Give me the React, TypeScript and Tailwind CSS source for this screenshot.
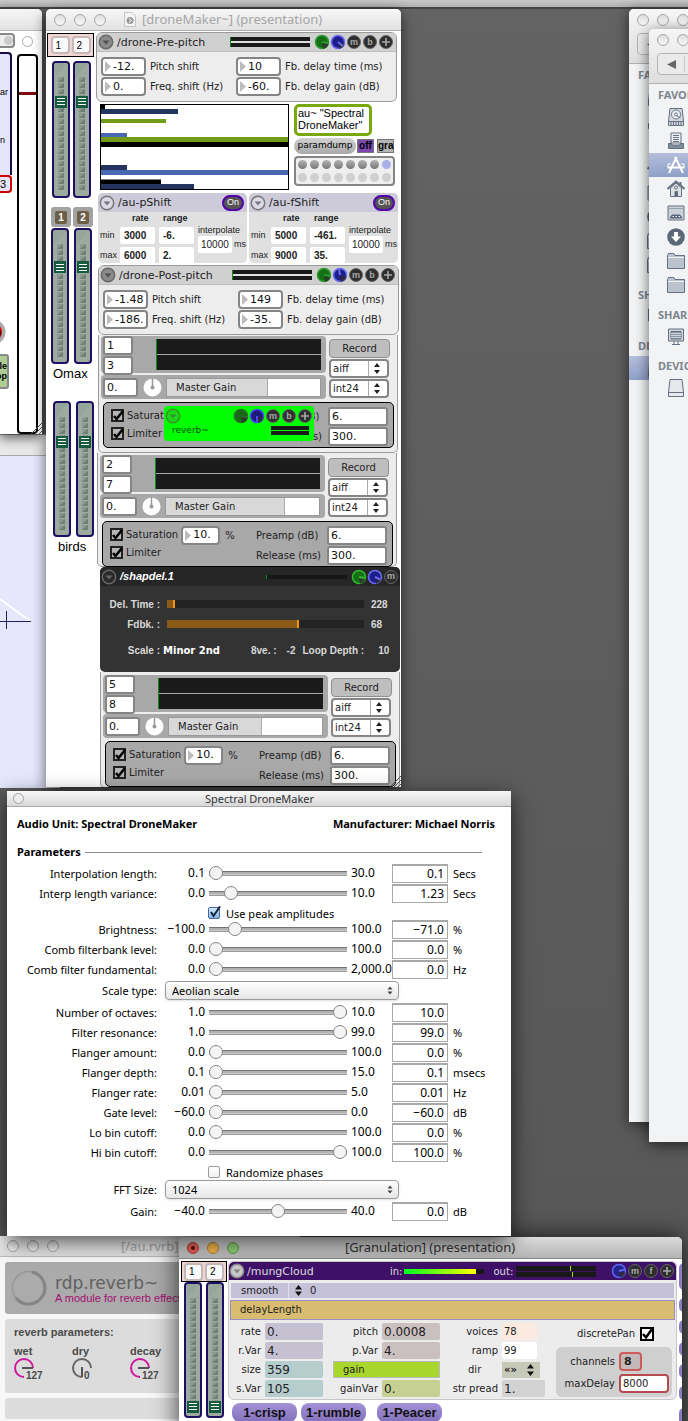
import React from "react";

const verdana = "font-['DejaVu_Sans',sans-serif]";
const lucida = "font-['Noto_Sans',sans-serif]";
const arial = "font-['Liberation_Sans',sans-serif]";

function Lights({ count = 3 }: { count?: number }) {
  return (
    <div className="flex gap-2">
      {Array.from({ length: count }, (_, i) => (
        <button
          key={i}
          aria-label="Window control"
          className="h-3 w-3 shrink-0 rounded-full border border-[#a6a6a6] bg-linear-to-b from-[#dedede] to-[#f8f8f8]"
        />
      ))}
    </div>
  );
}

function Resize() {
  return (
    <svg className="absolute right-0 bottom-0 h-3 w-3" viewBox="0 0 12 12" stroke="#555" strokeWidth="1">
      <path d="M1 12L12 1M5 12L12 5M9 12L12 9" />
    </svg>
  );
}

function Fader({ value, height = "h-[136px]" }: { value: number; height?: string }) {
  const id = React.useId();
  return (
    <div className={`relative w-[18px] shrink-0 overflow-hidden rounded-[4px] border-2 border-[#1d0f63] bg-[#9dab9f] ${height}`}>
      <svg className="absolute inset-0 h-full w-full" aria-hidden="true">
        <defs>
          <pattern id={id} width="6" height="6" patternUnits="userSpaceOnUse" x="4" y="14">
            <rect width="6" height="6" fill="#8b9a90" />
            <path d="M6 0V5H0Z" fill="#6f7f75" />
            <rect y="5" width="6" height="1" fill="#9dab9f" />
          </pattern>
        </defs>
        <path d="M1 0H13L1 14Z" fill="#95a599" />
        <rect x="4" y="14" width="6" height="114" fill={`url(#${id})`} />
      </svg>
      <input
        type="range"
        aria-label="Level"
        defaultValue={value}
        className="absolute inset-0 m-0 h-full w-full appearance-none bg-transparent [direction:rtl] [writing-mode:vertical-lr] [&::-webkit-slider-thumb]:mx-px [&::-webkit-slider-thumb]:h-[12px] [&::-webkit-slider-thumb]:w-[12px] [&::-webkit-slider-thumb]:appearance-none [&::-webkit-slider-thumb]:bg-[#175b3e] [&::-webkit-slider-thumb]:bg-[linear-gradient(#fff_0_1px,transparent_1px_3px,#fff_3px_4px,transparent_4px_6px,#fff_6px_7px)] [&::-webkit-slider-thumb]:bg-[length:8px_7px] [&::-webkit-slider-thumb]:bg-center [&::-webkit-slider-thumb]:bg-no-repeat"
      />
    </div>
  );
}

function ChannelPair({ className = "" }: { className?: string }) {
  return (
    <div className={`flex h-6 items-center justify-center gap-[2px] border border-black bg-[#f1d5d5] ${className}`}>
      {["1", "2"].map((v) => (
        <input
          key={v}
          aria-label={`Channel ${v}`}
          defaultValue={v}
          className={`h-[18px] w-[19px] rounded-[4px] border-2 border-[#c4b8b8] bg-[#fbfafa] pl-[3px] text-[10px] ${arial}`}
        />
      ))}
    </div>
  );
}

function Collapse({ tone = "dark" }: { tone?: "dark" | "light" | "green" | "black" | "plain" }) {
  const fill = { dark: "#8b8b8b", light: "#dcdae6", green: "#18d818", black: "#2a2a2a", plain: "#c8c8c8" }[tone];
  const ring = { dark: "#686868", light: "#777", green: "#3b8f2b", black: "#666", plain: "#888" }[tone];
  return (
    <button aria-label="Collapse" className="h-4 w-4 shrink-0">
      <svg viewBox="0 0 16 16">
        <circle cx="8" cy="8" r="6.700" fill={fill} stroke={ring} strokeWidth="1.500" />
        <path d="M4.500 6.500H11.500L8 10.500Z" fill={tone === "dark" ? "#505050" : ring} />
      </svg>
    </button>
  );
}

function Dial({ color, angle, dark }: { color: string; angle: number; dark: string }) {
  return (
    <svg className="h-4 w-4 shrink-0" viewBox="0 0 16 16" role="img" aria-label="Dial">
      <circle cx="8" cy="8" r="6.500" fill={dark} stroke={color} strokeWidth="1.600" />
      <path d="M8 8L14.500 9.500A7 7 0 0 1 9 15Z" fill="#2c2c2c" opacity="0.750" />
      <path d="M8 8V1.700" stroke={color} strokeWidth="2" transform={`rotate(${angle} 8 8)`} />
    </svg>
  );
}

function RoundKey({ label }: { label: string }) {
  return (
    <button
      aria-label={label}
      className={`m-px flex h-[14px] w-[14px] shrink-0 items-center justify-center rounded-full border border-[#666] bg-[#2e2e2e] text-[9px] leading-none font-bold text-[#a8a8a8] ${arial}`}
    >
      {label === "+" ? (
        <svg viewBox="0 0 10 10" className="h-[10px] w-[10px] shrink-0" stroke="#a8a8a8" strokeWidth="1.600">
          <path d="M5 1V9M1 5H9" />
        </svg>
      ) : (
        label
      )}
    </button>
  );
}

function NumBox({ value, label, className = "w-[45px]" }: { value: string; label: string; className?: string }) {
  return (
    <div className={`flex h-[19px] shrink-0 items-center rounded-[4px] border-2 border-[#858585] bg-white ${className}`}>
      <svg className="ml-[2px] h-[11px] w-[6px] shrink-0" viewBox="0 0 6 11">
        <path d="M0 0L6 5.500L0 11Z" fill="#bcbcbc" />
      </svg>
      <input aria-label={label} defaultValue={value} className={`w-full min-w-0 bg-transparent pl-[2px] text-[11px] text-[#111] ${verdana}`} />
    </div>
  );
}

function PlainBox({ value, label, className = "" }: { value: string; label: string; className?: string }) {
  return (
    <input
      aria-label={label}
      defaultValue={value}
      className={`h-[19px] shrink-0 rounded-[3px] border-2 border-[#858585] bg-white pl-[2px] text-[11px] leading-none text-[#111] ${verdana} ${className}`}
    />
  );
}

function PitchPanel({ title, values, angle, className = "" }: { title: string; values: string[]; angle: number; className?: string }) {
  const labels = ["Pitch shift", "Fb. delay time (ms)", "Freq. shift (Hz)", "Fb. delay gain (dB)"];
  return (
    <section className={`h-[70px] w-[301px] rounded-[6px] border border-[#9a9a9a] bg-[#ededed] ${className}`}>
      <header className="flex h-[19px] items-center rounded-t-[5px] border-b border-[#bdbdbd] bg-[#d0d0d0] pr-[2px] pl-[1px]">
        <Collapse />
        <h2 className={`pl-[3px] text-[11px] leading-none text-[#222] ${verdana}`}>{title}</h2>
        <div className="ml-auto flex items-center">
          <div className="mr-1 h-[10px] w-[80px] border-l border-[#0b8a0b] bg-[linear-gradient(#1a1a1a_0_4px,#e0e0e0_4px_6px,#1a1a1a_6px)]" />
          <Dial color="#2f9a2f" dark="#157015" angle={100} />
          <Dial color="#6a6af0" dark="#1d1d8c" angle={angle} />
          <RoundKey label="m" />
          <RoundKey label="b" />
          <RoundKey label="+" />
        </div>
      </header>
      <div className={`grid grid-cols-[45px_90px_45px_auto] gap-y-[1px] pt-[5px] pl-1 text-[10px] leading-[19px] text-[#222] ${verdana}`}>
        {labels.map((l, i) => (
          <React.Fragment key={l}>
            <NumBox value={values[i]} label={l} />
            <span className="pl-1 whitespace-nowrap">{l}</span>
          </React.Fragment>
        ))}
      </div>
    </section>
  );
}

function Spectrum() {
  return (
    <svg className="h-[86px] w-[189px] shrink-0" viewBox="0 0 189 86" role="img" aria-label="Spectrum">
      <rect x="0.500" y="0.500" width="188" height="85" fill="#fff" stroke="#000" />
      <path d="M1 3.500H5M1 78H61" stroke="#000" strokeWidth="5" />
      <path d="M1 7.500H78M1 63.500H27M1 82.500H94" stroke="#24345c" strokeWidth="5" />
      <path d="M1 17H66" stroke="#729c17" strokeWidth="4" />
      <path d="M1 31H27" stroke="#4a67b2" strokeWidth="4" />
      <path d="M1 68.500H188" stroke="#4a67b2" strokeWidth="5" />
      <path d="M1 35.500H188" stroke="#729c17" strokeWidth="5" />
      <path d="M1 40.500H188" stroke="#000" strokeWidth="5" />
    </svg>
  );
}

function ShiftPanel({ title, values }: { title: string; values: string[] }) {
  const field = "h-[17px] w-[35px] rounded-[2px] bg-white pl-1 text-[10px] font-bold";
  return (
    <section className={`h-[70px] w-[149px] shrink-0 rounded-[5px] bg-[#e0e0e0] text-[9px] text-[#222] ${arial}`}>
      <header className="flex h-[19px] items-center rounded-t-[5px] bg-[#cdcbd9] px-[1px]">
        <Collapse tone="light" />
        <h2 className={`pl-[3px] text-[11px] leading-none ${verdana}`}>{title}</h2>
        <button className="mr-[2px] ml-auto h-4 w-[22px] rounded-full border-2 border-[#5200a8] bg-[#555] text-[9px] leading-none text-white">On</button>
      </header>
      <div className="flex pl-[2px]">
        <div className="grid grid-cols-[20px_39px_35px] gap-y-[3px]">
          <span />
          <b className="pl-3 leading-3">rate</b>
          <b className="pl-1 leading-3">range</b>
          <span className="leading-[17px]">min</span>
          <input aria-label="min rate" defaultValue={values[0]} className={field} />
          <input aria-label="min range" defaultValue={values[1]} className={field} />
          <span className="leading-[17px]">max</span>
          <input aria-label="max rate" defaultValue={values[2]} className={field} />
          <input aria-label="max range" defaultValue={values[3]} className={field} />
        </div>
        <div className="pt-[12px] pl-1">
          <span className="block leading-3 whitespace-nowrap">interpolate</span>
          <label className="flex items-center gap-[2px]">
            <input defaultValue="10000" className="h-[17px] w-[34px] rounded-[2px] bg-white pl-[3px] text-[10px]" />
            ms
          </label>
        </div>
      </div>
    </section>
  );
}

function Check({ label }: { label: string }) {
  return (
    <label className="flex h-[18px] items-center gap-[3px]">
      <span className="relative h-[13px] w-[13px]">
        <input type="checkbox" defaultChecked className="block h-[13px] w-[13px] appearance-none border-2 border-[#222] bg-[#b5b5b5]" />
        <svg className="pointer-events-none absolute inset-0 h-[13px] w-[13px]" viewBox="0 0 13 13" fill="none" stroke="#000" strokeWidth="2.500">
          <path d="M3 7L5.500 10L12 2" />
        </svg>
      </span>
      {label}
    </label>
  );
}

function FormatSelect({ value }: { value: string }) {
  return (
    <div className="relative h-[19px] w-[60px] rounded-[4px] border-2 border-[#858585] bg-white">
      <select aria-label={value} className={`block h-full w-full appearance-none pl-[2px] text-[10px] leading-none ${verdana}`}>
        <option>{value}</option>
      </select>
      <svg className="pointer-events-none absolute top-0 right-0 h-[15px] w-[20px]" viewBox="0 0 20 15">
        <path d="M1.500 0V15" stroke="#aaa" />
        <path d="M7 6L10 2L13 6ZM7 9L10 13L13 9Z" fill="#222" />
      </svg>
    </div>
  );
}

function Recorder({ a, b, gain, className = "", children }: { a: string; b: string; gain: number; className?: string; children?: React.ReactNode }) {
  return (
    <section className={`relative w-[300px] shrink-0 rounded-b-[5px] border border-t-0 border-[#9a9a9a] bg-[#ededed] pl-[2px] text-[10px] text-[#222] ${verdana} ${className}`}>
      <div className="flex gap-[3px]">
        <div className="flex w-[225px] flex-col gap-[2px]">
          <div className="flex h-[37px] justify-between rounded-[4px] bg-[#a8a8a8] pr-[5px] pl-[2px]">
            <div className="flex flex-col gap-[1px]">
              <PlainBox value={a} label="Input A" className="w-[30px]" />
              <PlainBox value={b} label="Input B" className="w-[30px]" />
            </div>
            <div className="mt-[3px] h-[31px] w-[165px] border-l border-[#0b8a0b] bg-[linear-gradient(#1a1a1a_0_15px,#a8a8a8_15px_16px,#1a1a1a_16px)]" />
          </div>
          <div className="flex h-[24px] items-center rounded-[4px] bg-[#a8a8a8] pr-[5px] pl-[2px]">
            <PlainBox value="0." label="Gain value" className="w-[35px]" />
            <svg className="ml-[5px] h-[19px] w-[19px] shrink-0" viewBox="0 0 19 19" role="img" aria-label="Pan">
              <circle cx="9.500" cy="9.500" r="9" fill="#fff" />
              <path d="M9.500 0V9" stroke="#999" strokeWidth="1.500" />
              <circle cx="9.500" cy="9.500" r="2" fill="#999" />
            </svg>
            <div className="relative ml-auto h-[19px] w-[155px] border border-[#999] bg-white">
              <div className="flex h-full items-center border-r border-[#aaa] bg-[#d8d8d8] pl-[9px] whitespace-nowrap" style={{ width: `${gain}%` }}>
                Master Gain
              </div>
              <input type="range" aria-label="Master Gain" defaultValue={gain} className="absolute inset-0 m-0 h-full w-full opacity-0" />
            </div>
          </div>
        </div>
        <div className="flex flex-col gap-[1px] pt-[3px]">
          <button className="h-[19px] w-[61px] rounded-[4px] border border-[#909090] bg-[#bebebe]">Record</button>
          <FormatSelect value="aiff" />
          <FormatSelect value="int24" />
        </div>
      </div>
      <div className="mt-[3px] ml-[2px] flex h-[46px] w-[291px] items-start rounded-[5px] border border-black bg-[#a8a8a8] pl-[7px] whitespace-nowrap">
        <div className="pt-[3px]">
          <Check label="Saturation" />
          <Check label="Limiter" />
        </div>
        <div className="flex items-center gap-[5px] pt-[4px] pl-[3px]">
          <NumBox value="10." label="Saturation amount" className="w-[39px]" />%
        </div>
        <div className="ml-auto grid grid-cols-[71px_60px] gap-y-[1px] pt-[4px] pr-[5px] leading-[19px]">
          <span>Preamp (dB)</span>
          <PlainBox value="6." label="Preamp (dB)" className="w-[60px]" />
          <span>Release (ms)</span>
          <PlainBox value="300." label="Release (ms)" className="w-[60px]" />
        </div>
      </div>
      {children}
    </section>
  );
}

function ReverbOverlay() {
  return (
    <div className="absolute top-[71px] left-[65px] h-[35px] w-[150px] rounded-[4px] bg-[#00ff00] pt-[2px] pr-[1px] pl-[1px]">
      <div className="flex justify-between">
        <Collapse tone="green" />
        <div className="flex">
          <Dial color="#2c6d2c" dark="#156b15" angle={100} />
          <Dial color="#4a4ae8" dark="#191980" angle={180} />
          <RoundKey label="m" />
          <RoundKey label="b" />
          <RoundKey label="+" />
        </div>
      </div>
      <div className={`flex items-center justify-between pr-1 pl-[7px] text-[9px] text-[#0b4a0b] ${verdana}`}>
        <span>reverb~</span>
        <span className="h-[9px] w-[38px] bg-[linear-gradient(#1a1a1a_0_4px,#00ff00_4px_5px,#1a1a1a_5px)]" />
      </div>
    </div>
  );
}

function ShapDel() {
  const rows = [
    { label: "Del. Time :", value: "228", pct: 4 },
    { label: "Fdbk. :", value: "68", pct: 67 },
  ];
  return (
    <section className={`relative ml-1 h-[105px] w-[300px] shrink-0 overflow-hidden rounded-[5px] bg-[#333] text-[10px] font-bold text-[#d8d8d8] ${arial}`}>
      <header className="flex h-[19px] items-center bg-[#262626] pr-[1px] pl-[1px]">
        <Collapse tone="black" />
        <h2 className="pl-[3px] text-[11px] text-white italic">/shapdel.1</h2>
        <div className="ml-auto h-1 w-[81px] border-l border-[#0b8a0b] bg-[#161616]" />
        <div className="ml-1 flex">
          <Dial color="#2fb52f" dark="#157015" angle={100} />
          <Dial color="#6a6af0" dark="#1d1d8c" angle={115} />
          <RoundKey label="m" />
        </div>
      </header>
      <div className="flex flex-col gap-2 pt-3">
        {rows.map((r) => (
          <label key={r.label} className="flex h-3 items-center">
            <span className="w-[60px] text-right">{r.label}</span>
            <span className="relative ml-[7px] h-2 w-[197px] bg-[#232323]">
              <span className="block h-2 border-r-2 border-[#f0941a] bg-[#8a5a18]" style={{ width: `${r.pct}%` }} />
              <input type="range" defaultValue={r.pct} className="absolute inset-0 m-0 h-full w-full opacity-0" />
            </span>
            <span className="pl-[7px]">{r.value}</span>
          </label>
        ))}
      </div>
      <div className="flex items-center pt-[13px] whitespace-nowrap">
        <span className="w-[60px] text-right">Scale :</span>
        <span className={`w-[91px] pl-[3px] text-[10px] text-white ${verdana}`}>Minor 2nd</span>
        <span>8ve. :</span>
        <span className="pl-[10px]">-2</span>
        <span className="pl-[7px]">Loop Depth :</span>
        <span className="pl-[14px]">10</span>
      </div>
    </section>
  );
}

function DroneWindow() {
  return (
    <main className="absolute top-[9px] left-[46px] flex h-[778px] w-[355px] flex-col overflow-hidden rounded-t-[5px] bg-white shadow-[0_4px_14px_rgba(0,0,0,0.600)]">
      <header className={`flex h-[22px] shrink-0 items-center border-b border-[#b0b0b0] bg-linear-to-b from-[#f7f7f7] to-[#e2e2e2] pl-2 ${lucida}`}>
        <Lights />
        <svg className="ml-[18px] h-[15px] w-3" viewBox="0 0 12 15">
          <path d="M0.500 0.500H8L11.500 4V14.500H0.500Z" fill="#f5f5f5" stroke="#c4c4c4" />
          <circle cx="6" cy="8.500" r="3.500" fill="#999" />
          <path d="M5 6.500L7.500 8.500L5 10.500" stroke="#fff" fill="none" />
        </svg>
        <h1 className="pl-[6px] text-[13px] leading-none text-[#a5a5a5]">[droneMaker~] (presentation)</h1>
      </header>
      <div className="flex">
        <aside className={`flex w-[50px] shrink-0 flex-col pt-[2px] pl-[1px] ${arial}`}>
          <ChannelPair className="w-[47px]" />
          <div className="mt-1 flex gap-[3px] pl-[5px]">
            <Fader value={72} height="h-[137px]" />
            <Fader value={72} height="h-[137px]" />
          </div>
          <div className="mt-[9px] flex gap-[2px] pl-1">
            {["1", "2"].map((n) => (
              <span key={n} className="flex h-[20px] w-[20px] items-center justify-center rounded-[3px] bg-[#a2a2a2] text-[10px] font-bold text-white">
                <span className="h-[13px] w-3 rounded-[2px] bg-[#6d5f45] text-center leading-[13px]">{n}</span>
              </span>
            ))}
          </div>
          <div className="mt-[1px] flex gap-[5px] pl-1">
            <Fader value={73} />
            <Fader value={73} />
          </div>
          <p className="pt-[1px] pl-[6px] text-[13px] leading-[18px]">Omax</p>
          <div className="mt-[18px] flex gap-[5px] pl-[6px]">
            <Fader value={72} />
            <Fader value={72} />
          </div>
          <p className="pt-[1px] pl-[11px] text-[13px] leading-[18px]">birds</p>
        </aside>
        <div className="flex flex-col pt-[1px]">
          <PitchPanel title="/drone-Pre-pitch" values={["-12.", "10", "0.", "-60."]} angle={130} />
          <div className="mt-[2px] flex pl-1">
            <Spectrum />
            <div className="flex flex-col pl-[5px]">
              <div className={`h-8 w-[78px] rounded-[5px] border-[3px] border-[#78a80b] bg-white pl-[1px] text-[11px] leading-3 ${arial}`}>au~ "Spectral DroneMaker"</div>
              <div className={`mt-[2px] flex items-center text-[11px] font-bold ${arial}`}>
                <button className={`h-4 w-[62px] rounded-full bg-linear-to-b from-[#d2d2d2] to-[#a8a8a8] text-[9px] font-normal ${verdana}`}>paramdump</button>
                <button className="ml-px h-[14px] w-[17px] border border-[#777] bg-[#7b48b0] text-[10px] leading-none">off</button>
                <button className="ml-[3px] h-[14px] w-[17px] border border-[#777] bg-[#b4b4b4] text-[10px] leading-none">gra</button>
              </div>
              <div className="mt-[2px] grid h-[30px] w-[101px] grid-cols-8 place-items-center rounded-[4px] border-2 border-[#858585] bg-[#efefef]">
                {Array.from({ length: 16 }, (_, i) => (
                  <button
                    key={i}
                    aria-label={`Preset ${i + 1}`}
                    className={`h-[9px] w-[9px] rounded-full ${i === 7 ? "bg-[#a9b0ea]" : i < 7 ? "bg-linear-to-b from-[#b5b5b5] to-[#777]" : "bg-[#d0d0d0]"}`}
                  />
                ))}
              </div>
            </div>
          </div>
          <div className="mt-[3px] flex gap-[2px] pl-[2px]">
            <ShiftPanel title="/au-pShift" values={["3000", "-6.", "6000", "2."]} />
            <ShiftPanel title="/au-fShift" values={["5000", "-461.", "9000", "35."]} />
          </div>
          <PitchPanel title="/drone-Post-pitch" values={["-1.48", "149", "-186.", "-35."]} angle={-10} className="mt-[2px] ml-[2px]" />
          <Recorder a="1" b="3" gain={66} className="ml-[2px] h-[118px] pt-[1px]">
            <ReverbOverlay />
          </Recorder>
          <Recorder a="2" b="7" gain={78} className="ml-[1px] h-[114px] pt-[2px]" />
          <ShapDel />
          <Recorder a="5" b="8" gain={61} className="ml-[4px] h-[116px] pt-[3px]" />
        </div>
      </div>
      <Resize />
    </main>
  );
}

type Param = { name: string; min: string; max: string; value: string; unit: string; pct: number };
const params: (Param | { check: string; on: boolean } | { select: string; name: string })[] = [
  { name: "Interpolation length:", min: "0.1", max: "30.0", value: "0.1", unit: "Secs", pct: 0 },
  { name: "Interp length variance:", min: "0.0", max: "10.0", value: "1.23", unit: "Secs", pct: 12 },
  { check: "Use peak amplitudes", on: true },
  { name: "Brightness:", min: "−100.0", max: "100.0", value: "−71.0", unit: "%", pct: 15 },
  { name: "Comb filterbank level:", min: "0.0", max: "100.0", value: "0.0", unit: "%", pct: 0 },
  { name: "Comb filter fundamental:", min: "0.0", max: "2,000.0", value: "0.0", unit: "Hz", pct: 0 },
  { name: "Scale type:", select: "Aeolian scale" },
  { name: "Number of octaves:", min: "1.0", max: "10.0", value: "10.0", unit: "", pct: 100 },
  { name: "Filter resonance:", min: "1.0", max: "99.0", value: "99.0", unit: "%", pct: 100 },
  { name: "Flanger amount:", min: "0.0", max: "100.0", value: "0.0", unit: "%", pct: 0 },
  { name: "Flanger depth:", min: "0.1", max: "15.0", value: "0.1", unit: "msecs", pct: 0 },
  { name: "Flanger rate:", min: "0.01", max: "5.0", value: "0.01", unit: "Hz", pct: 0 },
  { name: "Gate level:", min: "−60.0", max: "0.0", value: "−60.0", unit: "dB", pct: 0 },
  { name: "Lo bin cutoff:", min: "0.0", max: "100.0", value: "0.0", unit: "%", pct: 0 },
  { name: "Hi bin cutoff:", min: "0.0", max: "100.0", value: "100.0", unit: "%", pct: 100 },
  { check: "Randomize phases", on: false },
  { name: "FFT Size:", select: "1024" },
  { name: "Gain:", min: "−40.0", max: "40.0", value: "0.0", unit: "dB", pct: 50 },
];

function SpectralWindow() {
  return (
    <section className={`absolute top-[791px] left-[7px] w-[504px] bg-white pb-[15px] text-[12px] leading-none text-black shadow-[0_6px_20px_rgba(0,0,0,0.700)] ${lucida}`}>
      <header className="flex h-4 items-center border-b border-[#a8a8a8] bg-linear-to-b from-[#f8f8f8] to-[#d8d8d8] pl-[6px]">
        <button aria-label="Close" className="h-[11px] w-[11px] rounded-full border border-[#a0a0a0] bg-[#eee]" />
        <h2 className="flex-1 pr-4 text-center text-[11px] text-[#333]">Spectral DroneMaker</h2>
      </header>
      <div className="flex justify-between pt-[10px] pr-4 pl-[10px] text-[11px] leading-[14px] font-bold">
        <span>Audio Unit: Spectral DroneMaker</span>
        <span>Manufacturer: Michael Norris</span>
      </div>
      <div className="flex items-center gap-1 pt-[14px] pr-[29px] pb-1 pl-[10px] text-[11px] leading-[14px] font-bold">
        Parameters
        <span className="h-px flex-1 bg-[#8a8a8a]" />
      </div>
      {params.map((p, i) => {
        if ("check" in p)
          return (
            <label key={i} className="flex h-4 items-end gap-[6px] pl-[201px] text-[11px] leading-[11px]">
              <span className="relative h-3 w-3">
                <input
                  type="checkbox"
                  defaultChecked={p.on}
                  className="block h-3 w-3 appearance-none rounded-[2px] border border-[#999] bg-linear-to-b from-white to-[#f0f0f0] checked:border-[#4a6a9c] checked:from-[#d6e8fa] checked:to-[#84b4e8]"
                />
                {p.on && (
                  <svg className="pointer-events-none absolute -top-[1px] left-0 h-[13px] w-[13px]" viewBox="0 0 13 13" fill="none" stroke="#14233c" strokeWidth="2">
                    <path d="M3 6L5.500 10L12 0.500" />
                  </svg>
                )}
              </span>
              {p.check}
            </label>
          );
        if ("select" in p)
          return (
            <label key={i} className="flex h-[23px] items-center text-[11px]">
              <span className="w-[150px] text-right">{p.name}</span>
              <span className="relative ml-2 h-[19px] w-[234px]">
                <select className="h-full w-full appearance-none rounded-[4px] border border-[#9a9a9a] bg-linear-to-b from-white via-[#f2f2f2] to-[#e6e6e6] pl-[6px] shadow-sm">
                  <option>{p.select}</option>
                </select>
                <svg className="pointer-events-none absolute top-[5px] right-[6px] h-[9px] w-[6px]" viewBox="0 0 6 9" fill="#444">
                  <path d="M0.500 3.500L3 0.500L5.500 3.500ZM0.500 5.500L3 8.500L5.500 5.500Z" />
                </svg>
              </span>
            </label>
          );
        return (
          <div key={i} className="flex h-5 items-center">
            <span className="w-[150px] text-right text-[11px] whitespace-nowrap">{p.name}</span>
            <span className="w-12 text-right">{p.min}</span>
            <input
              type="range"
              aria-label={p.name}
              defaultValue={p.pct}
              className="mx-1 h-[14px] w-[138px] shrink-0 appearance-none bg-[linear-gradient(transparent_0_5px,#747474_5px_6px,#b0b0b0_6px_8px,#cacaca_8px_9px,#9a9a9a_9px_10px,transparent_10px)] [&::-webkit-slider-thumb]:h-[14px] [&::-webkit-slider-thumb]:w-[14px] [&::-webkit-slider-thumb]:appearance-none [&::-webkit-slider-thumb]:rounded-full [&::-webkit-slider-thumb]:border [&::-webkit-slider-thumb]:border-[#858585] [&::-webkit-slider-thumb]:bg-[#f4f4f4]"
            />
            <span className="w-[41px] shrink-0">{p.max}</span>
            <input aria-label={`${p.name} value`} defaultValue={p.value} className="h-[19px] w-14 border border-t-2 border-[#a8a8a8] pr-[3px] pb-px text-right" />
            <span className="pl-[5px] text-[11px]">{p.unit}</span>
          </div>
        );
      })}
    </section>
  );
}

function Knob({ label, value, full }: { label: string; value: string; full: boolean }) {
  return (
    <div className="w-[58px]">
      <span className="block leading-[13px]">{label}</span>
      <div className="flex items-end">
        <svg className="h-[21px] w-[21px] shrink-0" viewBox="0 0 21 21" fill="none" strokeWidth="2" role="img" aria-label={label}>
          <path d="M10 19A9 9 0 1 1 19 10" stroke={full ? "#cc18a0" : "#666"} />
          <path d={full ? "M8 10H19" : "M10 19V9"} stroke="#555" />
        </svg>
        <span className="-ml-[9px] text-[10px] leading-[7px]">{value}</span>
      </div>
    </div>
  );
}

function ReverbWindow() {
  return (
    <section className={`absolute top-[1236px] -bottom-4 left-0 w-[300px] bg-[#f7f7f7] ${arial}`}>
      <header className={`flex h-[21px] items-center border-b border-[#bbb] bg-linear-to-b from-[#f7f7f7] to-[#e0e0e0] pl-[7px] ${lucida}`}>
        <Lights />
        <h2 className="pl-[62px] text-[13px] leading-none text-[#aaa]">[/au.rvrb]</h2>
      </header>
      <div className="flex flex-col gap-[5px] pt-[5px] pl-[5px]">
        <div className="flex h-[52px] items-center rounded-[3px] bg-[#ababab] pl-[6px]">
          <svg className="h-9 w-9 shrink-0" viewBox="0 0 36 36" fill="none">
            <circle cx="18" cy="18" r="16.500" stroke="#969696" strokeWidth="1.500" />
            <path d="M21 2A16.200 16.200 0 1 1 5 28" stroke="#858585" strokeWidth="3" />
          </svg>
          <div className="pl-2 whitespace-nowrap">
            <p className={`text-[17px] leading-5 text-[#606060] ${verdana}`}>rdp.reverb~</p>
            <p className="text-[11px] leading-[11px] text-[#a3106f]">A module for reverb effects</p>
          </div>
        </div>
        <div className="h-[74px] rounded-[3px] bg-[#dcdcdc] pt-[5px] pl-[9px] text-[11px] font-bold text-[#4a4a4a]">
          <p className="leading-4">reverb parameters:</p>
          <div className="flex pt-[5px] pl-0">
            <Knob label="wet" value="127" full />
            <Knob label="dry" value="0" full={false} />
            <Knob label="decay" value="127" full />
          </div>
        </div>
        <div className="h-[21px] rounded-[3px] bg-[#dcdcdc]" />
      </div>
    </section>
  );
}

function Cell({ label, value, color, width = "w-[58px]", labelWidth = "w-[26px]" }: { label: string; value: string; color: string; width?: string; labelWidth?: string }) {
  return (
    <label className="flex h-[17px] items-center gap-1 whitespace-nowrap">
      <span className={`shrink-0 text-right ${labelWidth}`}>{label}</span>
      <input defaultValue={value} className={`h-[17px] rounded-[2px] pl-[2px] text-[12px] leading-none ${width} ${color}`} />
    </label>
  );
}

function GranulationWindow() {
  const lights = ["border-[#a83a34] bg-[#e8605a]", "border-[#b5802c] bg-[#f3b54e]", "border-[#5c9a48] bg-[#8fd078]"];
  return (
    <section className="absolute top-[1237px] -bottom-4 left-[179px] w-[503px] overflow-hidden rounded-t-[5px] bg-white shadow-[0_0_26px_rgba(0,0,0,0.750)]">
      <header className={`relative flex h-[22px] items-center gap-2 border-b border-[#888] bg-linear-to-b from-[#dcdcdc] to-[#b4b4b4] pl-2 ${lucida}`}>
        {lights.map((c) => (
          <button key={c} aria-label="Window control" className={`flex h-3 w-3 items-center justify-center rounded-full border ${c}`}>
            {c.includes("a83a34") && <span className="h-1 w-1 rounded-full bg-[#5c100c]" />}
          </button>
        ))}
        <h2 className="flex-1 pr-[69px] text-center text-[13px] leading-none text-[#333]">[Granulation] (presentation)</h2>
      </header>
      <div className="flex pl-[2px]">
        <aside className="w-[47px] shrink-0 pt-[2px]">
          <ChannelPair className="h-[21px] w-[46px]" />
          <div className="flex gap-1 pl-[3px]">
            <Fader value={2} />
            <Fader value={2} />
          </div>
        </aside>
        <div className={`w-[449px] shrink-0 pt-[2px] ${verdana}`}>
          <div className="h-[139px] overflow-hidden rounded-[6px] border border-[#c8c8c8] bg-[#ececec] text-[10px] text-[#222]">
            <div className="flex h-[18px] items-center bg-[#3e1067] pr-[1px] text-[#ddd]">
              <Collapse tone="plain" />
              <h3 className="w-[145px] pl-[2px] text-[11px] leading-none">/mungCloud</h3>
              <span>in:</span>
              <span className="ml-px h-[5px] w-[80px] bg-[linear-gradient(90deg,#00ff20,#ffff00_72px,#181818_72px)]" />
              <span className="pr-[3px] pl-[10px]">out:</span>
              <svg className="h-[11px] w-[80px]" viewBox="0 0 80 11" role="img" aria-label="Output meter">
                <path d="M0 2.500H80M0 8.500H80" stroke="#181818" strokeWidth="5" />
                <path d="M54.500 0V5M56.500 6V11" stroke="#a8d818" />
              </svg>
              <span className="ml-auto flex">
                <Dial color="#5a68f0" dark="#24248a" angle={75} />
                <RoundKey label="m" />
                <RoundKey label="f" />
                <RoundKey label="+" />
              </span>
            </div>
            <div className="mx-[2px] mt-[3px] flex h-[15px] items-center bg-[#c4c1d8]">
              <span className="flex h-full w-[58px] items-center border-r border-[#e0dff0] pl-[10px]">smooth</span>
              <svg className="ml-[6px] h-[11px] w-[7px]" viewBox="0 0 7 11">
                <path d="M0 4.500L3.500 0L7 4.500ZM0 6.500L3.500 11L7 6.500Z" fill="#111" />
              </svg>
              <span className="pl-2">0</span>
            </div>
            <div className="mx-[1px] mt-[2px] h-[20px] border border-[#9a8fc4] bg-[#d8bd70] pl-[9px] leading-[18px]">delayLength</div>
            <div className="flex pt-[3px]">
              <div className="flex w-[94px] flex-col gap-[2px] pl-[6px]">
                <Cell label="rate" value="0." color="bg-[#c6c1d1]" />
                <Cell label="r.Var" value="4." color="bg-[#c6c1d1]" />
                <Cell label="size" value="359" color="bg-[#b6cdcd]" />
                <Cell label="s.Var" value="105" color="bg-[#b6cdcd]" />
              </div>
              <div className="flex w-[122px] flex-col items-end gap-[2px] pr-[5px]">
                <Cell label="pitch" value="0.0008" color="bg-[#cbc0c0]" labelWidth="w-[44px]" />
                <Cell label="p.Var" value="4." color="bg-[#cbc0c0]" labelWidth="w-[44px]" />
                <button className="h-[17px] w-[107px] border border-[#bbb] bg-[#a9d62c] pl-[9px] text-left leading-none">gain</button>
                <Cell label="gainVar" value="0." color="bg-[#c5d092]" labelWidth="w-[44px]" />
              </div>
              <div className="flex w-[105px] flex-col gap-[2px] text-[10px]">
                <Cell label="voices" value="78" color="bg-[#fbeadf] text-[10px]!" width="w-[35px]" labelWidth="w-[53px]" />
                <Cell label="ramp" value="99" color="bg-white text-[10px]!" width="w-[35px]" labelWidth="w-[53px]" />
                <label className="flex h-[17px] items-center gap-1">
                  <span className="w-[53px] pl-[23px]">dir</span>
                  <span className="relative h-4 w-[38px]">
                    <select className="block h-full w-full appearance-none bg-[#c6c8b8] pl-[2px] text-[10px] leading-none font-bold">
                      <option>«»</option>
                    </select>
                    <svg className="pointer-events-none absolute top-[2px] right-[6px] h-3 w-[7px]" viewBox="0 0 7 12">
                      <path d="M0 4.500L3.500 0L7 4.500ZM0 7.500L3.500 12L7 7.500Z" fill="#111" />
                    </svg>
                  </span>
                </label>
                <Cell label="str pread" value="1." color="bg-[#d2d2d2]" width="w-[43px]" labelWidth="w-[53px]" />
              </div>
              <div className="flex flex-1 flex-col items-end pt-[3px] pr-[4px]">
                <label className="flex items-center gap-[5px] pr-[18px]">
                  discretePan
                  <span className="relative h-[14px] w-[14px]">
                    <input type="checkbox" defaultChecked className="block h-[14px] w-[14px] appearance-none border-2 border-black bg-white" />
                    <svg className="pointer-events-none absolute inset-0 h-[14px] w-[14px]" viewBox="0 0 14 14" fill="none" stroke="#000" strokeWidth="2.500">
                      <path d="M3 7L6 10.500L12 2" />
                    </svg>
                  </span>
                </label>
                <div className="mt-[6px] grid h-[50px] w-[116px] grid-cols-[59px_50px] items-center gap-x-1 rounded-[6px] bg-[#cfcfcf] pt-[3px] pb-[2px] text-right">
                  <span>channels</span>
                  <input aria-label="channels" defaultValue="8" className="h-[19px] w-[23px] rounded-[4px] border-2 border-[#cf5a5a] bg-[#c4b9b9] pl-[3px] text-[11px] leading-none font-bold" />
                  <span>maxDelay</span>
                  <input aria-label="maxDelay" defaultValue="8000" className="h-[19px] w-[50px] rounded-[4px] border-2 border-[#b54a50] bg-white pl-[2px] text-[10px] leading-none" />
                </div>
              </div>
            </div>
          </div>
          <div className={`flex gap-1 pt-[3px] pl-1 text-[13px] font-bold ${arial}`}>
            {["1-crisp", "1-rumble", "1-Peacer"].map((n) => (
              <button key={n} className={`h-[19px] w-[65px] rounded-[8px] bg-linear-to-b from-[#a292d6] to-[#8471bd] leading-none text-[#111] ${n === "1-Peacer" ? "ml-[7px]" : ""}`}>
                {n}
              </button>
            ))}
          </div>
        </div>
        <div className="flex w-[3px] shrink-0 flex-col gap-2 pt-1 pl-[2px]">
          {["h-[27px]", "h-[14px]", "h-[14px]", "h-[14px]", "h-[14px]", "h-[14px]", "h-[18px]"].map((h, i) => (
            <span key={i} className={`w-3 rounded-l-[5px] bg-[#8d7cc4] ${h}`} />
          ))}
        </div>
      </div>
    </section>
  );
}

const sideIcons: Record<string, React.ReactNode> = {
  disk: <><path d="M3 0.500H15L16.500 13V17.500H1.500V13Z" fill="#d5d9df" /><circle cx="9" cy="6.500" r="4.500" fill="#eef0f3" /><circle cx="9" cy="6.500" r="1.500" /><path d="M10 8L13.500 10M1.500 13.500H16.500M4 14V17M6.500 14V17M9 14V17M11.500 14V17M14 14V17" /></>,
  doc: <><path d="M4 1H14V11H4Z" fill="#eef0f3" /><path d="M6 3.500H12M6 5.500H12M6 7.500H12M6 9.500H12" /><path d="M1.500 11.500H4.500L5.500 13H12.500L13.500 11.500H16.500V16.500H1.500Z" fill="#7f8a9a" /></>,
  app: <g stroke="#fff" strokeWidth="2"><path d="M9.500 1L2 17M8 1L16 17M0.500 11.500H17.500" fill="none" /><path d="M1 11V8H4M17 11V8H14" strokeWidth="1" fill="none" /></g>,
  home: <><path d="M3.500 8V16.500H14.500V8L9 3Z" fill="#dde0e5" /><path d="M0.500 9L9 1.500L17.500 9" fill="none" strokeWidth="2" /><path d="M13.500 2V5" strokeWidth="2" /><path d="M8 11.500H10.500V16.500H8Z" fill="#596475" /><circle cx="9" cy="7.500" r="1.500" /></>,
  desk: <><path d="M1 2H17V16H1Z" fill="#ccd1d8" /><path d="M3 14L5 11H13L15 14Z" fill="#4c5768" /><path d="M5.500 12.500H7M8.500 12.500H10M11.500 12.500H13" stroke="#fff" /><path d="M1 4.500H17" stroke="#98a2ae" /></>,
  down: <><circle cx="9" cy="9" r="8.800" fill="#5c6879" stroke="none" /><path d="M7 4H11V8.500H14L9 14L4 8.500H7Z" fill="#fff" stroke="none" /></>,
  folder: <><path d="M0.500 3.500L1.500 1.500H7L8 3.500H17.500V16.500H0.500Z" fill="#bcc3cc" /><path d="M1 5.500H17" stroke="#eee" /></>,
  imac: <><path d="M1.500 1H16.500V13H1.500Z" fill="#d2d6dc" /><path d="M4 3.500H14V11H4Z" fill="#8b96a5" /><path d="M4 5.500H14M4 7.500H14M4 9.500H14" stroke="#d2d6dc" /><path d="M7 13V16M11 13V16M5 16.500H13" /></>,
  drive: <><path d="M3 0.500H15L16.500 13V17.500H1.500V13Z" fill="#e6e8eb" /><path d="M1.500 13.500H16.500" /></>,
};

function FinderWindow({ className, selected }: { className: string; selected: string }) {
  const groups = [
    { title: "FAVORITES", gap: "pt-1", items: ["disk", "doc", "app", "home", "desk", "down", "folder", "folder"] },
    { title: "SHARED", gap: "pt-[11px]", items: ["imac"] },
    { title: "DEVICES", gap: "pt-[10px]", items: ["drive"] },
  ];
  return (
    <section className={`absolute h-[1113px] w-[400px] overflow-hidden rounded-t-[5px] bg-[#f2f3f4] shadow-[0_3px_14px_rgba(0,0,0,0.600)] ${lucida} ${className}`}>
      <header className="h-[55px] border-b border-[#b0b0b0] bg-linear-to-b from-[#f6f6f6] to-[#dedede] pt-[5px] pl-2">
        <Lights />
        <button aria-label="Back" className="mt-[7px] flex h-[22px] w-[52px] items-center rounded-[4px] border border-[#b5b5b5] bg-[#eaeaea] pl-[9px]">
          <svg className="h-[9px] w-[9px]" viewBox="0 0 9 9">
            <path d="M9 0V9L0 4.500Z" fill="#666" />
          </svg>
          <span className="ml-2 h-4 w-px bg-[#c8c8c8]" />
        </button>
      </header>
      <nav>
        {groups.map((g) => (
          <div key={g.title} className={g.gap}>
            <h3 className="h-[17px] pl-[9px] text-[11px] leading-[13px] font-bold text-[#7d858f]">{g.title}</h3>
            {g.items.map((it, i) => (
              <a key={i} href="#" aria-label={it} className={`flex h-6 items-center pl-[18px] ${it === selected ? "bg-linear-to-b from-[#b4bedb] to-[#8fa0c8]" : ""}`}>
                <svg className="h-[18px] w-[18px]" viewBox="0 0 18 18" stroke="#667183" strokeWidth="1" fill="none">
                  {sideIcons[it]}
                </svg>
              </a>
            ))}
          </div>
        ))}
      </nav>
    </section>
  );
}

function EdgeWindow() {
  return (
    <section className={`absolute top-[9px] left-0 flex h-[425px] w-[42px] gap-2 overflow-hidden rounded-tr-[5px] bg-white pt-[22px] shadow-[0_4px_12px_rgba(0,0,0,0.600)] ${arial}`}>
      <div className="absolute inset-x-0 top-0 h-[22px] border-b border-[#b8b8b8] bg-linear-to-b from-[#f7f7f7] to-[#e2e2e2]" />
      <div className="flex w-[15px] shrink-0 flex-col text-[10px]">
        <span className="mt-[2px] flex h-[15px] w-[15px] items-center justify-end rounded-r-[4px] border-2 border-l-0 border-[#888] bg-[#eee]">
          <span className="h-[9px] w-[9px] rounded-full bg-[#ccc]" />
        </span>
        <div className="mt-1 flex h-[123px] w-3 flex-col rounded-tr-[4px] border-2 border-b-0 border-l-0 border-[#1a0a4a] bg-[#e4e4fb] text-[9px]">
          <span className="pt-[32px]">ar</span>
          <span className="pt-[34px]">n</span>
        </div>
        <span className="h-[18px] w-3 rounded-r-[4px] border-2 border-l-0 border-[#d00000] bg-[#e4e4fb] text-[11px] leading-[14px]">3</span>
        <svg className="mt-[126px] h-[26px] w-[6px]" viewBox="0 0 6 26">
          <circle cx="-7" cy="13" r="12.500" fill="#aaa" />
          <circle cx="-7" cy="13" r="9" fill="#f00000" />
          <circle cx="-3" cy="14" r="4" fill="#111" />
        </svg>
        <div className="mt-[9px] flex h-[35px] w-[9px] flex-col items-end rounded-r-[3px] border-2 border-l-0 border-[#888] bg-[#afcd93] pt-[5px] text-[9px] leading-[10px] font-bold">
          <span>le</span>
          <span>op</span>
        </div>
      </div>
      <div className="-ml-[6px] flex w-[21px] shrink-0 flex-col items-center pt-[5px]">
        <button aria-label="Trigger" className="h-[11px] w-[11px] shrink-0 rounded-full border border-[#aaa] bg-white" />
        <div className="mt-[7px] h-[383px] w-[21px] rounded-[4px] border-2 border-black bg-white pt-9">
          <div className="h-[3px] bg-[#7b0d10]" />
        </div>
      </div>
      <Resize />
    </section>
  );
}

export default function App() {
  return (
    <div className="relative min-h-screen w-full overflow-hidden bg-linear-to-b from-[#636363] to-[#565656]">
      <div className="h-[9px] border-b-2 border-[#444] bg-linear-to-b from-[#c8c8c8] to-[#b0b0b0]" />
      <section className="absolute top-[434px] left-0 h-[354px] w-[60px] border-t border-[#888] bg-[#e6e6fd]">
        <div className="h-[21px] border-b border-[#aaa] bg-[#e8e8e8]" />
        <svg className="mt-[138px] h-[45px] w-[46px]" viewBox="0 0 46 45" fill="none">
          <path d="M0 5L30 27" stroke="#fff" strokeWidth="2" />
          <path d="M0 27.500H31M6.500 17V35" stroke="#23235a" />
        </svg>
      </section>
      <EdgeWindow />
      <DroneWindow />
      <FinderWindow className="top-[9px] left-[629px]" selected="drive" />
      <FinderWindow className="top-[29px] left-[649px]" selected="app" />
      <ReverbWindow />
      <GranulationWindow />
      <SpectralWindow />
    </div>
  );
}
